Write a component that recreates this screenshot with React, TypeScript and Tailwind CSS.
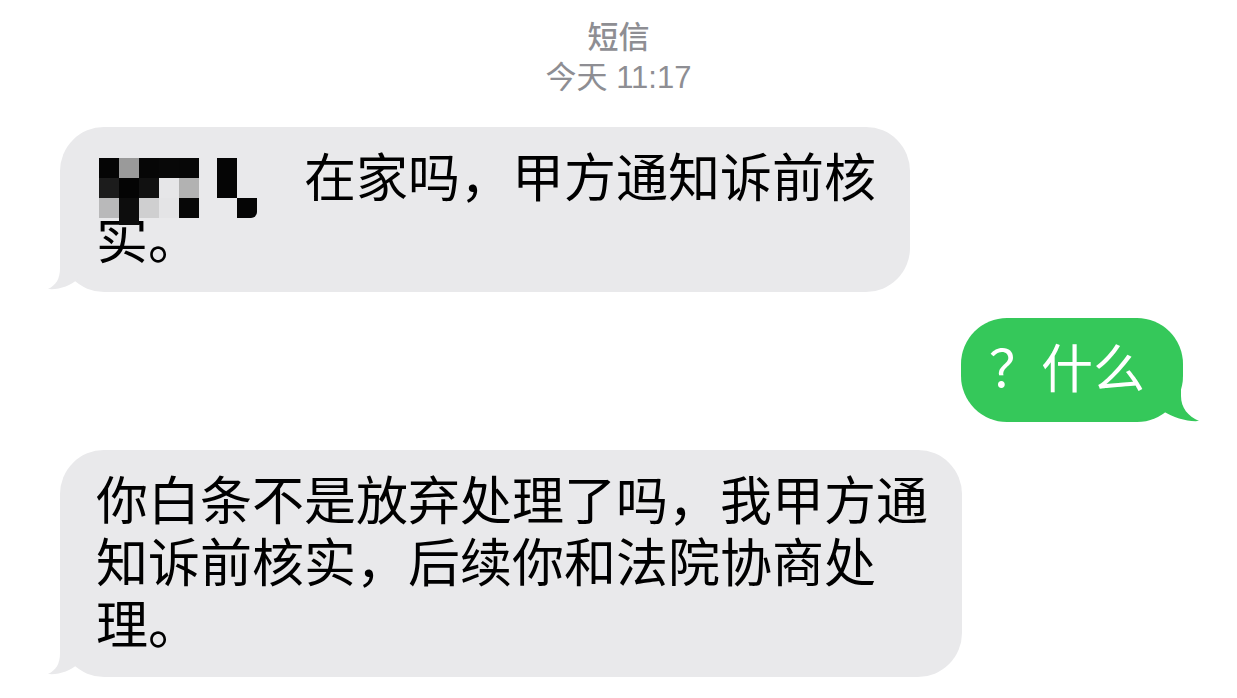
import React from 'react';

const font = "font-['Liberation_Sans','Noto_Sans_CJK_SC',sans-serif]";

// pixel mosaic hiding the sender's name
const mosaic: { x: number; y: number; w?: number; h?: number; c: string; r?: boolean }[] = [
  { x: 0, y: 0, c: '#050505' },
  { x: 20, y: 0, c: '#9a9a9a' },
  { x: 40, y: 0, c: '#060606' },
  { x: 60, y: 0, c: '#080808' },
  { x: 80, y: 0, c: '#070707' },
  { x: 118, y: 0, c: '#050505' },
  { x: 0, y: 20, c: '#1c1c1c' },
  { x: 20, y: 20, c: '#040404' },
  { x: 40, y: 20, c: '#111111' },
  { x: 60, y: 20, c: '#e6e6e8' },
  { x: 80, y: 20, c: '#b2b2b2' },
  { x: 118, y: 20, c: '#050505' },
  { x: 0, y: 40, c: '#b9b9ba' },
  { x: 20, y: 40, h: 27, c: '#0d0d0d' },
  { x: 40, y: 40, c: '#cfcfd0' },
  { x: 60, y: 40, c: '#e4e4e6' },
  { x: 80, y: 40, c: '#070707' },
  { x: 138, y: 40, c: '#050505', r: true },
];

function GrayTail() {
  return (
    <svg className="absolute left-[-16px] bottom-0" width="60" height="44" viewBox="0 0 60 44">
      <path d="M16 0 L16 20 C16 31 12 37 4 41 C15 42 26 38 34 31 C40 38 48 42 60 42 L60 0 Z" fill="#e9e9eb" />
    </svg>
  );
}

function GreenTail() {
  return (
    <svg className="absolute right-[-18px] bottom-0" width="62" height="44" viewBox="0 0 62 44">
      <path d="M42 0 L42 18 C42 30 49 38 60 43 C49 44 35 40 24 33 C17 38 9 42 0 42 L0 0 Z" fill="#35c85a" />
    </svg>
  );
}

export default function App() {
  return (
    <div className={`w-[1237px] h-[698px] bg-white overflow-hidden ${font}`}>
      <div className="pt-[18px] flex flex-col items-center text-[#8e8e93] text-[31px] leading-[40px]">
        <div className="font-medium">短信</div>
        <div>今天 11:17</div>
      </div>

      <div className="flex flex-col gap-[26px] mt-[29px]">
        <div className="pl-[60px] flex">
          <div className="relative bg-[#e9e9eb] rounded-[44px] pl-[36px] pr-[34px] pt-[21px] pb-[20px] text-[52px] leading-[62px] text-black whitespace-nowrap">
            <GrayTail />
            <div className="relative">
              <span className="relative inline-block w-[208px] h-[62px] align-top">
                <span className="absolute left-[3px] top-[10px] w-[160px] h-[70px]">
                  {mosaic.map((b, i) => (
                    <span
                      key={i}
                      className={`absolute ${b.r ? 'rounded-br-[6px]' : ''}`}
                      style={{ left: b.x, top: b.y, width: b.w ?? 20, height: b.h ?? 20, background: b.c }}
                    />
                  ))}
                </span>
              </span>
              在家吗，甲方通知诉前核
              <br />
              实。
            </div>
          </div>
        </div>

        <div className="pr-[54px] flex justify-end">
          <div className="relative bg-[#35c85a] rounded-[46px] pl-[28px] pr-[38px] pt-[21px] pb-[21px] text-[52px] leading-[62px] text-white whitespace-nowrap">
            <GreenTail />
            <div className="relative">？什么</div>
          </div>
        </div>

        <div className="pl-[60px] flex mt-[2px]">
          <div className="relative bg-[#e9e9eb] rounded-[44px] pl-[36px] pr-[34px] pt-[21px] pb-[20px] text-[52px] leading-[62px] text-black whitespace-nowrap">
            <GrayTail />
            <div className="relative">
              你白条不是放弃处理了吗，我甲方通
              <br />
              知诉前核实，后续你和法院协商处
              <br />
              理。
            </div>
          </div>
        </div>
      </div>
    </div>
  );
}
